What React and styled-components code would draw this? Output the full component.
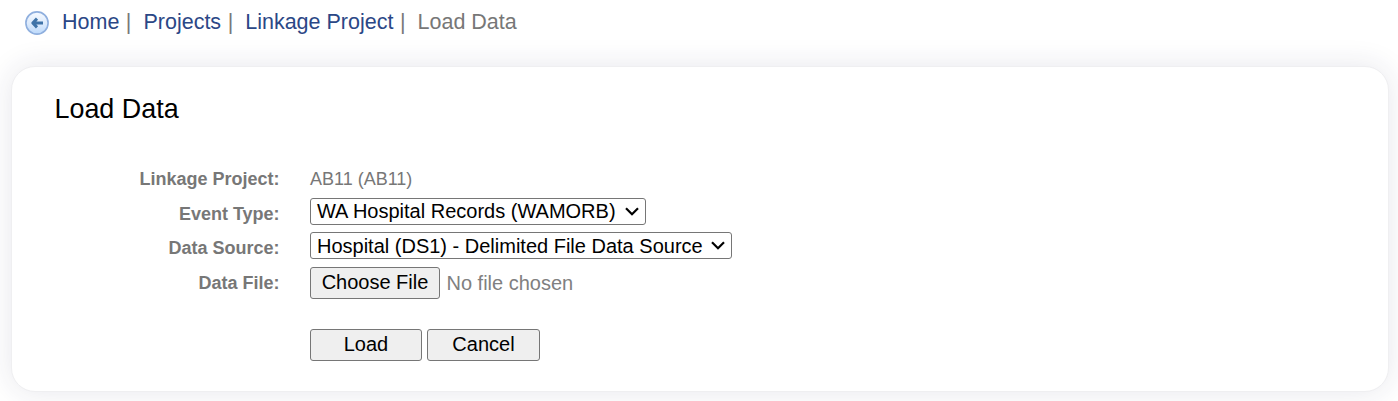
import React from "react";
import styled, { createGlobalStyle } from "styled-components";

const GlobalStyle = createGlobalStyle`
  * { box-sizing: border-box; }
  body {
    margin: 0;
    background: #fff;
    color: #777;
    font-family: "Liberation Sans", Arial, Helvetica, sans-serif;
    overflow: hidden;
  }
`;

const Page = styled.div`
  height: 401px;
  overflow: hidden;
  display: flex;
  flex-direction: column;
`;

const Breadcrumb = styled.nav`
  height: 66px;
  flex: none;
  display: flex;
  align-items: flex-start;
  padding: 9px 0 0 25px;
  font-size: 21.5px;
  line-height: 27px;
  white-space: pre;
`;

const BackIcon = styled.svg`
  width: 24px;
  height: 24px;
  flex: none;
  margin: 2px 13px 0 0;
`;

const Crumb = styled.a`
  color: #2b4786;
  text-decoration: none;
`;

const Separator = styled.span`
  width: 24.1px;
  padding-left: 6.5px;
`;

const Card = styled.main`
  flex: none;
  height: 326px;
  margin: 0 9px 0 11px;
  padding: 27px 43px 0;
  background: #fff;
  border: 1px solid #efeff1;
  border-radius: 24px;
  box-shadow: 0 0 30px rgba(40, 40, 80, 0.11);
`;

const Title = styled.h1`
  margin: 0 0 41px -0.5px;
  color: #000;
  font-size: 26.9px;
  font-weight: 400;
  line-height: 31px;
`;

const Row = styled.div`
  display: flex;
  height: ${(p) => p.$height}px;
`;

const Label = styled.label`
  width: 224.6px;
  margin-right: 30.4px;
  padding-top: ${(p) => p.$top}px;
  text-align: right;
  font-size: 18px;
  font-weight: 700;
  line-height: 20px;
`;

const Value = styled.span`
  padding-top: 3px;
  font-size: 18px;
  line-height: 20px;
`;

const SelectBox = styled.div`
  display: flex;
  align-items: flex-start;
  justify-content: space-between;
  width: ${(p) => p.$width}px;
  height: 27px;
  padding: 0 6px;
  border: 1px solid #767676;
  border-radius: 3px;
  background: #fff;
  color: #000;
  font-size: 20px;
  line-height: ${(p) => p.$line || 25}px;
  white-space: nowrap;
`;

const Chevron = styled.svg`
  width: 14px;
  height: 9px;
  margin-top: 8px;
`;

const Button = styled.button`
  width: ${(p) => p.$width}px;
  height: 32px;
  padding: 0 0 2px;
  margin-right: ${(p) => p.$gap}px;
  border: 1px solid #767676;
  border-radius: 3px;
  background: #efefef;
  color: #000;
  font-family: inherit;
  font-size: 20px;
  line-height: 28px;
`;

const FileStatus = styled.span`
  padding-top: 5px;
  font-size: 20px;
  line-height: 23px;
  color: #808080;
`;

const Actions = styled.div`
  display: flex;
  padding: 27px 0 0 255px;
`;

function Select({ width, line, children }) {
  return (
    <SelectBox $width={width} $line={line}>
      <span>{children}</span>
      <Chevron viewBox="0 0 14 9">
        <path d="M1 1.2 L7 7.2 L13 1.2" fill="none" stroke="#000" strokeWidth="2.2" />
      </Chevron>
    </SelectBox>
  );
}

export default function App() {
  return (
    <Page>
      <GlobalStyle />
      <Breadcrumb>
        <BackIcon viewBox="0 0 24 24">
          <defs>
            <linearGradient id="face" x1="0" y1="0" x2="0" y2="1">
              <stop offset="0" stopColor="#f6faff" />
              <stop offset="0.55" stopColor="#dceafc" />
              <stop offset="1" stopColor="#bcd9fb" />
            </linearGradient>
          </defs>
          <circle cx="12" cy="12" r="11.1" fill="url(#face)" stroke="#8fafde" strokeWidth="1.6" />
          <path
            d="M12 7.6 L7.8 12 L12 16.4 M8 12 H18"
            fill="none"
            stroke="#3f73a8"
            strokeWidth="3"
            strokeLinejoin="round"
          />
        </BackIcon>
        <Crumb>Home</Crumb>
        <Separator>|</Separator>
        <Crumb>Projects</Crumb>
        <Separator>|</Separator>
        <Crumb>Linkage Project</Crumb>
        <Separator>|</Separator>
        <span>Load Data</span>
      </Breadcrumb>
      <Card>
        <Title>Load Data</Title>
        <Row $height={32}>
          <Label $top={3}>Linkage Project:</Label>
          <Value>AB11 (AB11)</Value>
        </Row>
        <Row $height={34}>
          <Label $top={6}>Event Type:</Label>
          <Select width={336}>WA Hospital Records (WAMORB)</Select>
        </Row>
        <Row $height={35}>
          <Label $top={6}>Data Source:</Label>
          <Select width={422} line={27}>Hospital (DS1) - Delimited File Data Source</Select>
        </Row>
        <Row $height={35}>
          <Label $top={6}>Data File:</Label>
          <Button $width={130} $gap={6.5}>Choose File</Button>
          <FileStatus>No file chosen</FileStatus>
        </Row>
        <Actions>
          <Button $width={112} $gap={5}>Load</Button>
          <Button $width={113} $gap={0}>Cancel</Button>
        </Actions>
      </Card>
    </Page>
  );
}
